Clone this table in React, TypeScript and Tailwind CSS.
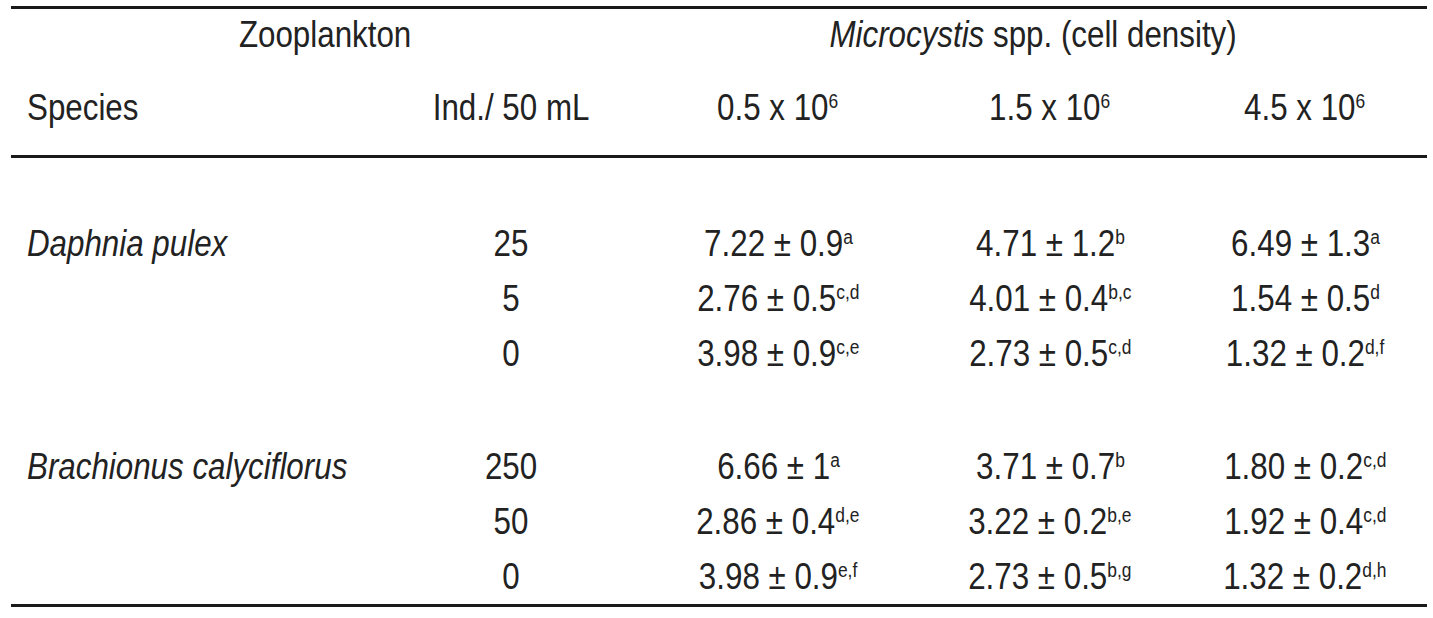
const cols = 'grid grid-cols-[372px_256px_278px_266px_244px]';

type Cell = [string, string];

const groups: { species: string; rows: { ind: string; vals: Cell[] }[] }[] = [
  {
    species: 'Daphnia pulex',
    rows: [
      { ind: '25', vals: [['7.22 ± 0.9', 'a'], ['4.71 ± 1.2', 'b'], ['6.49 ± 1.3', 'a']] },
      { ind: '5', vals: [['2.76 ± 0.5', 'c,d'], ['4.01 ± 0.4', 'b,c'], ['1.54 ± 0.5', 'd']] },
      { ind: '0', vals: [['3.98 ± 0.9', 'c,e'], ['2.73 ± 0.5', 'c,d'], ['1.32 ± 0.2', 'd,f']] },
    ],
  },
  {
    species: 'Brachionus calyciflorus',
    rows: [
      { ind: '250', vals: [['6.66 ± 1', 'a'], ['3.71 ± 0.7', 'b'], ['1.80 ± 0.2', 'c,d']] },
      { ind: '50', vals: [['2.86 ± 0.4', 'd,e'], ['3.22 ± 0.2', 'b,e'], ['1.92 ± 0.4', 'c,d']] },
      { ind: '0', vals: [['3.98 ± 0.9', 'e,f'], ['2.73 ± 0.5', 'b,g'], ['1.32 ± 0.2', 'd,h']] },
    ],
  },
];

// the source face is a condensed grotesque; squeeze Liberation Sans to match
const Narrow = ({ children, left }: { children: React.ReactNode; left?: boolean }) => (
  <span className={`inline-block whitespace-nowrap scale-x-[0.87] ${left ? 'origin-left' : 'origin-center'}`}>
    {children}
  </span>
);

const Sup = ({ children }: { children: React.ReactNode }) => (
  <sup className="text-[20px] -top-[12px]">{children}</sup>
);

export default function App() {
  return (
    <div
      className="bg-white w-[1433px] h-[618px] overflow-hidden pt-[6px] text-[#222] text-[36px] leading-none"
      style={{ fontFamily: '"Liberation Sans", Arial, sans-serif' }}
    >
      <div className="ml-[11px] w-[1416px] border-t-[3px] border-b-[3px] border-[#1a1a1a]">
        {/* Header */}
        <div className={`${cols} h-[52px] items-center`}>
          <div className="col-span-2 text-center">
            <Narrow>Zooplankton</Narrow>
          </div>
          <div className="col-span-3 text-center">
            <Narrow>
              <i>Microcystis</i> spp. (cell density)
            </Narrow>
          </div>
        </div>
        <div className={`${cols} h-[97px] items-center border-b-[3px] border-[#1a1a1a]`}>
          <div className="pl-4">
            <Narrow left>Species</Narrow>
          </div>
          <div className="text-center">
            <Narrow>Ind./ 50 mL</Narrow>
          </div>
          <div className="text-center">
            <Narrow>0.5 x 10<Sup>6</Sup></Narrow>
          </div>
          <div className="text-center">
            <Narrow>1.5 x 10<Sup>6</Sup></Narrow>
          </div>
          <div className="text-center">
            <Narrow>4.5 x 10<Sup>6</Sup></Narrow>
          </div>
        </div>

        {/* Body */}
        <div className="pt-[58px]">
          {groups.map((g, gi) => (
            <div key={g.species} className={gi > 0 ? 'mt-[58px]' : ''}>
              {g.rows.map((r, ri) => (
                <div key={ri} className={`${cols} h-[55px] items-center`}>
                  <div className="pl-4 italic">{ri === 0 && <Narrow left>{g.species}</Narrow>}</div>
                  <div className="text-center">
                    <Narrow>{r.ind}</Narrow>
                  </div>
                  {r.vals.map(([v, s], vi) => (
                    <div key={vi} className="text-center">
                      <Narrow>
                        {v}
                        <Sup>{s}</Sup>
                      </Narrow>
                    </div>
                  ))}
                </div>
              ))}
            </div>
          ))}
        </div>
      </div>
    </div>
  );
}
